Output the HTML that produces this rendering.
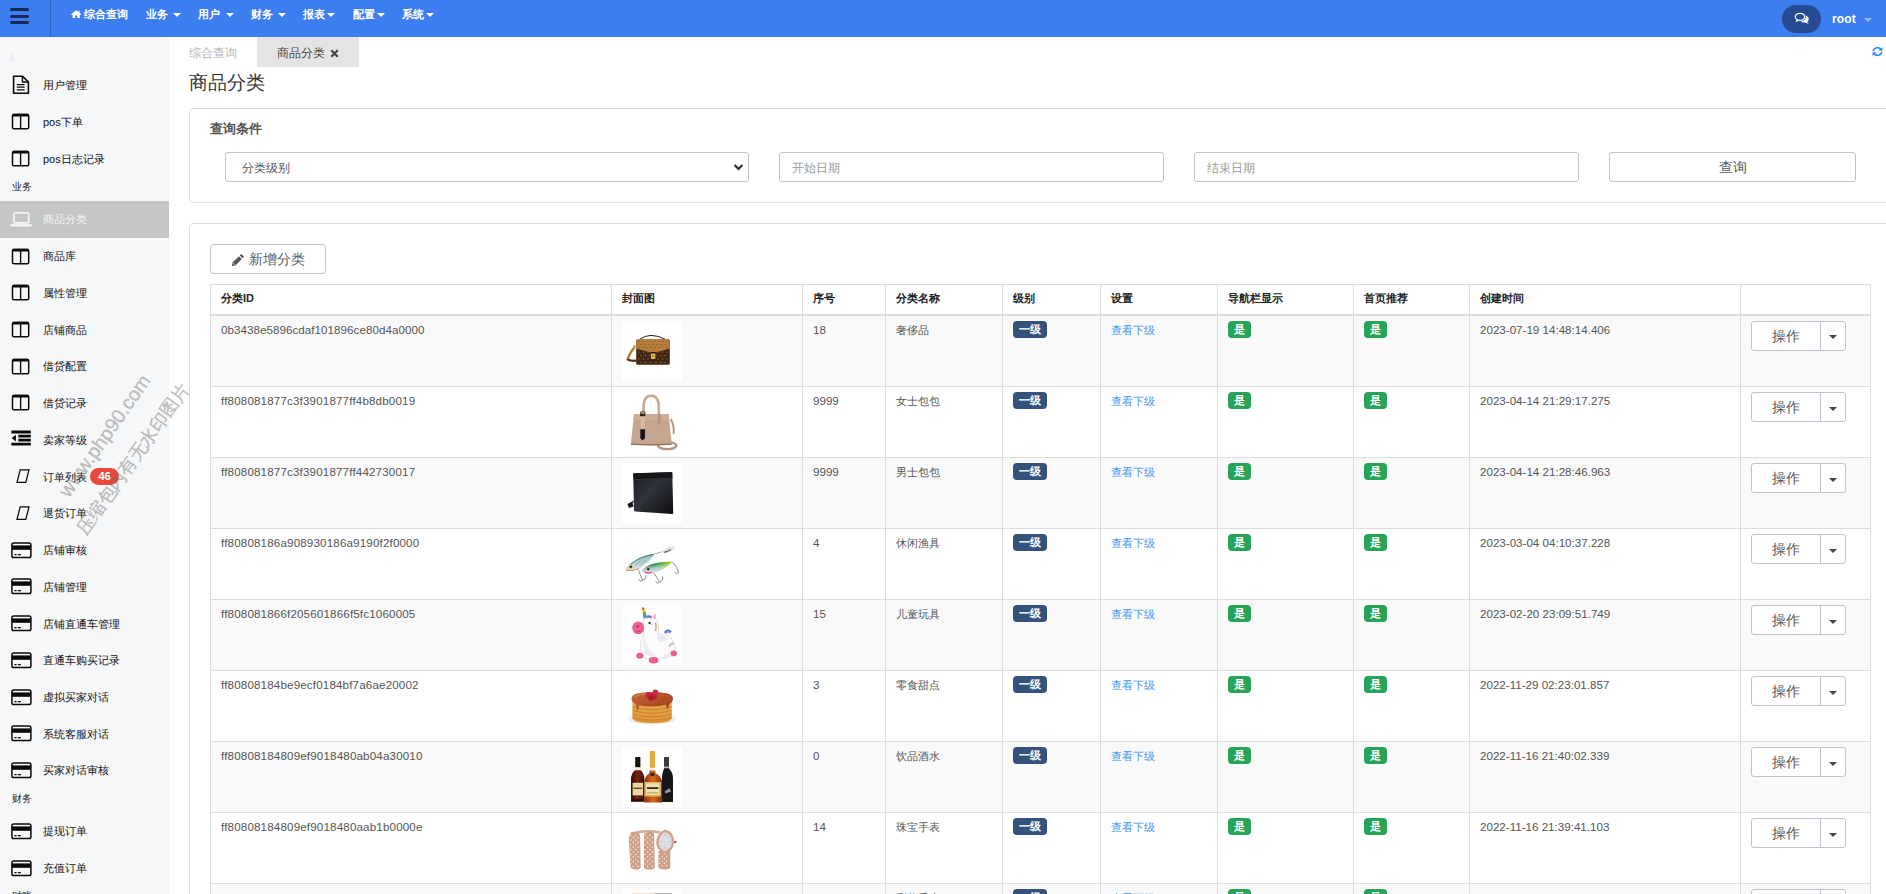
<!DOCTYPE html>
<html lang="zh">
<head>
<meta charset="utf-8">
<title>商品分类</title>
<style>
*{box-sizing:border-box;margin:0;padding:0}
html,body{width:1886px;height:894px;overflow:hidden;background:#fff;font-family:"Liberation Sans",sans-serif;font-size:12px;color:#333;line-height:1}
.abs{position:absolute}
/* navbar */
#nav{position:absolute;left:0;top:0;width:1886px;height:37px;background:#3c7def}
#nav .bar{position:absolute;left:10px;width:19px;height:3px;border-radius:1.5px;background:#172b52}
#nav .div{position:absolute;left:50px;top:0;width:1px;height:37px;background:#2f63c4}
#nav .mi{position:absolute;top:8px;height:12px;line-height:12px;font-size:11px;font-weight:bold;color:#fff;white-space:nowrap}
.caret{display:inline-block;width:0;height:0;border-left:4px solid transparent;border-right:4px solid transparent;border-top:4px solid #fff;vertical-align:middle}
#pill{position:absolute;left:1782px;top:5px;width:39px;height:28px;border-radius:14px;background:#254b93}
/* sidebar */
#side{position:absolute;left:0;top:37px;width:169px;height:857px;background:#f5f7f9;overflow:hidden}
#side .it{position:absolute;left:0;width:169px;height:37px}
#side .it .tx{position:absolute;left:43px;top:12px;font-size:11px;line-height:13px;color:#111;white-space:nowrap}
#side .it svg{position:absolute;left:11px;top:9px}
#side .it.on{background:#c5c6c6}
#side .it.on .tx{color:#f4f4f4}
#side .lb{position:absolute;left:12px;font-size:10px;line-height:12px;color:#222}
#side .bdg{position:absolute;left:90.3px;top:9.6px;width:28.6px;height:17.4px;border-radius:9px;background:#e8493a;color:#fff;font-weight:bold;font-size:11.5px;line-height:17.4px;text-align:center}
.wm{position:absolute;color:rgba(110,110,110,.4);-webkit-text-stroke:0.35px rgba(110,110,110,.4);white-space:nowrap;line-height:1;z-index:20}
/* main */
#nav{z-index:10}
#side{z-index:9}
#main{position:absolute;left:0;top:0;width:1886px;height:894px;background:#fff;overflow:hidden;z-index:1}
.tab0{position:absolute;left:189px;top:46px;font-size:12px;line-height:14px;color:#b3b3b3}
.tab1{position:absolute;left:257px;top:37px;width:102px;height:30px;background:#e4e4e4;color:#444;font-size:12px;line-height:14px}
.tab1 span{position:absolute;left:20px;top:9px}
.tab1 svg{position:absolute;left:73px;top:11.5px}
.h1{position:absolute;left:189px;top:72px;font-size:19.3px;line-height:22px;color:#333}
.panel{position:absolute;left:189px;width:1760px;border:1px solid #ddd;border-radius:4px;background:#fff}
.ptitle{position:absolute;left:210px;top:121px;font-size:13px;line-height:15px;font-weight:bold;color:#555}
.inp{position:absolute;top:152px;height:30px;border:1px solid #bcc5cd;border-radius:3px;background:#fff}
.inp span{position:absolute;left:12px;top:8px;font-size:12px;line-height:14px;color:#9a9a9a}
.qbtn{position:absolute;left:1609px;top:152px;width:247px;height:30px;border:1px solid #bcc5cd;border-radius:3px;background:#fff;text-align:center;font-size:14px;line-height:28px;color:#555}
.addbtn{position:absolute;left:210px;top:244px;width:116px;height:30px;border:1px solid #bcc5cd;border-radius:4px;background:#fff;color:#56606a}
.addbtn span{position:absolute;left:38px;top:6px;font-size:14px;line-height:16px}
.tb{position:absolute;left:210px;top:284px;width:1661px;table-layout:fixed;border-collapse:collapse;font-size:11.6px;color:#555}
.tb th,.tb td{border:1px solid #ddd;vertical-align:top;text-align:left;padding:0 0 0 10px;overflow:hidden;white-space:nowrap}
.tb th{height:30px;font-size:11px;font-weight:bold;color:#222;border-bottom:2px solid #ddd;line-height:14px;padding-top:6px}
.tb td{height:71px;line-height:14px;padding-top:7px}
.tb tbody tr:nth-child(odd) td{background:#f9f9f9}
.tb tbody tr:first-child td{height:72px}
.tb td.cn{font-size:11px}
.tb td.id{letter-spacing:0.16px}
.tb tbody tr:first-child td.id{letter-spacing:0.05px}
.tb a{color:#4296f3;font-size:11px}
.tb .pic{display:block;margin-top:-2px}
.lv,.ys{display:inline-block;height:17px;line-height:17px;border-radius:4px;color:#fff;font-size:11px;font-weight:bold;text-align:center;margin-top:-2px;position:relative;top:-1px}
.lv{width:34px;background:#33537d}
.ys{width:23px;background:#27a35a}
.op{position:relative;margin-top:-2px;height:30px;width:96px}
.o1{position:absolute;left:0;top:0;width:70px;height:30px;border:1px solid #bcc5cd;border-radius:3px 0 0 3px;background:#fff;text-align:center;font-size:14px;line-height:28px;color:#555}
.o2{position:absolute;left:69px;top:0;width:26px;height:30px;border:1px solid #bcc5cd;border-radius:0 3px 3px 0;background:#fff;text-align:center;line-height:29px}
</style>
</head>
<body>
<svg width="0" height="0" style="position:absolute"><defs><filter id="bl" x="-5%" y="-5%" width="110%" height="110%"><feGaussianBlur stdDeviation="0.45"/></filter></defs></svg>
<div id="nav">
  <div class="bar" style="top:8px"></div><div class="bar" style="top:14.7px"></div><div class="bar" style="top:21px"></div>
  <div class="div"></div>
  <div class="mi" style="left:71px"><svg width="10.4" height="8.4" viewBox="0 0 11 9" style="vertical-align:0px;margin-right:3px"><path d="M5.5 0.2 L0 4.6 L0.7 5.4 L1.6 4.7 V9 H4.4 V6 H6.6 V9 H9.4 V4.7 L10.3 5.4 L11 4.6 L9 3 V0.8 H7.8 V2 Z" fill="#fff"/></svg>综合查询</div>
  <div class="mi" style="left:146px">业务</div><i class="caret abs" style="left:173px;top:13px"></i>
  <div class="mi" style="left:198px">用户</div><i class="caret abs" style="left:226px;top:13px"></i>
  <div class="mi" style="left:251px">财务</div><i class="caret abs" style="left:278px;top:13px"></i>
  <div class="mi" style="left:303px">报表</div><i class="caret abs" style="left:327px;top:13px"></i>
  <div class="mi" style="left:352.5px">配置</div><i class="caret abs" style="left:377px;top:13px"></i>
  <div class="mi" style="left:402px">系统</div><i class="caret abs" style="left:426px;top:13px"></i>
  <div id="pill"><svg width="16" height="13" viewBox="0 0 16 13" style="position:absolute;left:11.5px;top:7px"><ellipse cx="10.3" cy="6.9" rx="4.4" ry="3.5" fill="#fff"/><path d="M12.4 9.2 L14.8 12 L10.6 10.2 Z" fill="#fff"/><ellipse cx="6" cy="4.8" rx="6" ry="4.6" fill="#254b93"/><ellipse cx="6" cy="4.8" rx="4.7" ry="3.5" fill="#254b93" stroke="#fff" stroke-width="1.25"/><path d="M2.8 7.6 L1.5 10.2 L5.4 8.6 Z" fill="#fff"/></svg></div>
  <div class="mi" style="left:1832px;top:13px;font-size:12px;letter-spacing:0.1px">root</div><i class="caret abs" style="left:1864px;top:18px;border-top-color:#9db9f3"></i>
</div>
<div id="side">
<div class="it" style="top:29.95px;height:36.73px"><svg width="18" height="20" viewBox="0 0 18 20" style="left:12px;top:8.36px"><path d="M1.6 1.2 H10.4 L16.4 7 V18.2 H1.6 Z" fill="none" stroke="#0a0a0a" stroke-width="1.6" stroke-linejoin="round"/><path d="M10.4 1.2 V7 H16.4" fill="none" stroke="#0a0a0a" stroke-width="1.4"/><path d="M4.8 9.6 H12.6 M4.8 12.2 H12.6 M4.8 14.8 H12.6" stroke="#0a0a0a" stroke-width="1.3"/></svg><span class="tx" style="top:12.51px">用户管理</span></div>
<div class="it" style="top:66.69px;height:36.73px"><svg width="19" height="17" viewBox="0 0 19 17" style="left:11.1px;top:9.76px"><rect x="1.5" y="1.4" width="16.2" height="14.4" rx="1.6" fill="none" stroke="#0a0a0a" stroke-width="1.5"/><rect x="1.5" y="0.8" width="16.2" height="2.6" rx="1" fill="#0a0a0a"/><path d="M9.6 2 V16" stroke="#0a0a0a" stroke-width="1.4"/></svg><span class="tx" style="top:12.51px">pos下单</span></div>
<div class="it" style="top:103.42px;height:36.73px"><svg width="19" height="17" viewBox="0 0 19 17" style="left:11.1px;top:9.76px"><rect x="1.5" y="1.4" width="16.2" height="14.4" rx="1.6" fill="none" stroke="#0a0a0a" stroke-width="1.5"/><rect x="1.5" y="0.8" width="16.2" height="2.6" rx="1" fill="#0a0a0a"/><path d="M9.6 2 V16" stroke="#0a0a0a" stroke-width="1.4"/></svg><span class="tx" style="top:12.51px">pos日志记录</span></div>
<div class="it on" style="top:164.03px;height:36.73px"><svg width="23" height="16" viewBox="0 0 23 16" style="left:10px;top:10.66px"><rect x="3.9" y="0.9" width="14.8" height="10" rx="1.2" fill="none" stroke="#f6f6f6" stroke-width="1.6"/><rect x="0.3" y="12.3" width="21.6" height="2.2" rx="1" fill="#f6f6f6"/></svg><span class="tx" style="top:11.71px">商品分类</span></div>
<div class="it" style="top:200.76px;height:36.73px"><svg width="19" height="17" viewBox="0 0 19 17" style="left:11.1px;top:9.76px"><rect x="1.5" y="1.4" width="16.2" height="14.4" rx="1.6" fill="none" stroke="#0a0a0a" stroke-width="1.5"/><rect x="1.5" y="0.8" width="16.2" height="2.6" rx="1" fill="#0a0a0a"/><path d="M9.6 2 V16" stroke="#0a0a0a" stroke-width="1.4"/></svg><span class="tx" style="top:12.51px">商品库</span></div>
<div class="it" style="top:237.50px;height:36.73px"><svg width="19" height="17" viewBox="0 0 19 17" style="left:11.1px;top:9.76px"><rect x="1.5" y="1.4" width="16.2" height="14.4" rx="1.6" fill="none" stroke="#0a0a0a" stroke-width="1.5"/><rect x="1.5" y="0.8" width="16.2" height="2.6" rx="1" fill="#0a0a0a"/><path d="M9.6 2 V16" stroke="#0a0a0a" stroke-width="1.4"/></svg><span class="tx" style="top:12.51px">属性管理</span></div>
<div class="it" style="top:274.23px;height:36.73px"><svg width="19" height="17" viewBox="0 0 19 17" style="left:11.1px;top:9.76px"><rect x="1.5" y="1.4" width="16.2" height="14.4" rx="1.6" fill="none" stroke="#0a0a0a" stroke-width="1.5"/><rect x="1.5" y="0.8" width="16.2" height="2.6" rx="1" fill="#0a0a0a"/><path d="M9.6 2 V16" stroke="#0a0a0a" stroke-width="1.4"/></svg><span class="tx" style="top:12.51px">店铺商品</span></div>
<div class="it" style="top:310.95px;height:36.73px"><svg width="19" height="17" viewBox="0 0 19 17" style="left:11.1px;top:9.76px"><rect x="1.5" y="1.4" width="16.2" height="14.4" rx="1.6" fill="none" stroke="#0a0a0a" stroke-width="1.5"/><rect x="1.5" y="0.8" width="16.2" height="2.6" rx="1" fill="#0a0a0a"/><path d="M9.6 2 V16" stroke="#0a0a0a" stroke-width="1.4"/></svg><span class="tx" style="top:12.51px">借贷配置</span></div>
<div class="it" style="top:347.68px;height:36.73px"><svg width="19" height="17" viewBox="0 0 19 17" style="left:11.1px;top:9.76px"><rect x="1.5" y="1.4" width="16.2" height="14.4" rx="1.6" fill="none" stroke="#0a0a0a" stroke-width="1.5"/><rect x="1.5" y="0.8" width="16.2" height="2.6" rx="1" fill="#0a0a0a"/><path d="M9.6 2 V16" stroke="#0a0a0a" stroke-width="1.4"/></svg><span class="tx" style="top:12.51px">借贷记录</span></div>
<div class="it" style="top:384.41px;height:36.73px"><svg width="21" height="16" viewBox="0 0 21 16" style="left:11px;top:8.76px"><path d="M0.4 0.5 H19.8 V3.4 H0.4 Z M7.3 4.7 H19.8 V7.4 H7.3 Z M7.3 8.7 H19.8 V11.4 H7.3 Z M0.4 12.7 H19.8 V15.5 H0.4 Z M4.9 4.7 V11.4 L0.7 8.05 Z" fill="#0a0a0a"/></svg><span class="tx" style="top:12.51px">卖家等级</span></div>
<div class="it" style="top:421.14px;height:36.73px"><svg width="15" height="15" viewBox="0 0 15 15" style="left:16px;top:10.66px"><path d="M4.2 0.8 H13 L9.8 13.3 H1 Z" fill="none" stroke="#0a0a0a" stroke-width="1.25" stroke-linejoin="miter"/></svg><span class="tx" style="top:12.51px">订单列表</span><span class="bdg">46</span></div>
<div class="it" style="top:457.88px;height:36.73px"><svg width="15" height="15" viewBox="0 0 15 15" style="left:16px;top:10.66px"><path d="M4.2 0.8 H13 L9.8 13.3 H1 Z" fill="none" stroke="#0a0a0a" stroke-width="1.25" stroke-linejoin="miter"/></svg><span class="tx" style="top:12.51px">退货订单</span></div>
<div class="it" style="top:494.61px;height:36.73px"><svg width="22" height="17" viewBox="0 0 22 17" style="left:10.5px;top:10.16px"><rect x="0.9" y="0.9" width="19" height="14.6" rx="1.8" fill="none" stroke="#0a0a0a" stroke-width="1.5"/><rect x="1" y="3.4" width="18.8" height="4.4" fill="#0a0a0a"/><path d="M3.4 12.6 H5.6 M6.8 12.6 H9.8" stroke="#0a0a0a" stroke-width="1.3"/></svg><span class="tx" style="top:12.51px">店铺审核</span></div>
<div class="it" style="top:531.33px;height:36.73px"><svg width="22" height="17" viewBox="0 0 22 17" style="left:10.5px;top:10.16px"><rect x="0.9" y="0.9" width="19" height="14.6" rx="1.8" fill="none" stroke="#0a0a0a" stroke-width="1.5"/><rect x="1" y="3.4" width="18.8" height="4.4" fill="#0a0a0a"/><path d="M3.4 12.6 H5.6 M6.8 12.6 H9.8" stroke="#0a0a0a" stroke-width="1.3"/></svg><span class="tx" style="top:12.51px">店铺管理</span></div>
<div class="it" style="top:568.06px;height:36.73px"><svg width="22" height="17" viewBox="0 0 22 17" style="left:10.5px;top:10.16px"><rect x="0.9" y="0.9" width="19" height="14.6" rx="1.8" fill="none" stroke="#0a0a0a" stroke-width="1.5"/><rect x="1" y="3.4" width="18.8" height="4.4" fill="#0a0a0a"/><path d="M3.4 12.6 H5.6 M6.8 12.6 H9.8" stroke="#0a0a0a" stroke-width="1.3"/></svg><span class="tx" style="top:12.51px">店铺直通车管理</span></div>
<div class="it" style="top:604.79px;height:36.73px"><svg width="22" height="17" viewBox="0 0 22 17" style="left:10.5px;top:10.16px"><rect x="0.9" y="0.9" width="19" height="14.6" rx="1.8" fill="none" stroke="#0a0a0a" stroke-width="1.5"/><rect x="1" y="3.4" width="18.8" height="4.4" fill="#0a0a0a"/><path d="M3.4 12.6 H5.6 M6.8 12.6 H9.8" stroke="#0a0a0a" stroke-width="1.3"/></svg><span class="tx" style="top:12.51px">直通车购买记录</span></div>
<div class="it" style="top:641.52px;height:36.73px"><svg width="22" height="17" viewBox="0 0 22 17" style="left:10.5px;top:10.16px"><rect x="0.9" y="0.9" width="19" height="14.6" rx="1.8" fill="none" stroke="#0a0a0a" stroke-width="1.5"/><rect x="1" y="3.4" width="18.8" height="4.4" fill="#0a0a0a"/><path d="M3.4 12.6 H5.6 M6.8 12.6 H9.8" stroke="#0a0a0a" stroke-width="1.3"/></svg><span class="tx" style="top:12.51px">虚拟买家对话</span></div>
<div class="it" style="top:678.25px;height:36.73px"><svg width="22" height="17" viewBox="0 0 22 17" style="left:10.5px;top:10.16px"><rect x="0.9" y="0.9" width="19" height="14.6" rx="1.8" fill="none" stroke="#0a0a0a" stroke-width="1.5"/><rect x="1" y="3.4" width="18.8" height="4.4" fill="#0a0a0a"/><path d="M3.4 12.6 H5.6 M6.8 12.6 H9.8" stroke="#0a0a0a" stroke-width="1.3"/></svg><span class="tx" style="top:12.51px">系统客服对话</span></div>
<div class="it" style="top:714.98px;height:36.73px"><svg width="22" height="17" viewBox="0 0 22 17" style="left:10.5px;top:10.16px"><rect x="0.9" y="0.9" width="19" height="14.6" rx="1.8" fill="none" stroke="#0a0a0a" stroke-width="1.5"/><rect x="1" y="3.4" width="18.8" height="4.4" fill="#0a0a0a"/><path d="M3.4 12.6 H5.6 M6.8 12.6 H9.8" stroke="#0a0a0a" stroke-width="1.3"/></svg><span class="tx" style="top:12.51px">买家对话审核</span></div>
<div class="it" style="top:775.84px;height:36.73px"><svg width="22" height="17" viewBox="0 0 22 17" style="left:10.5px;top:10.16px"><rect x="0.9" y="0.9" width="19" height="14.6" rx="1.8" fill="none" stroke="#0a0a0a" stroke-width="1.5"/><rect x="1" y="3.4" width="18.8" height="4.4" fill="#0a0a0a"/><path d="M3.4 12.6 H5.6 M6.8 12.6 H9.8" stroke="#0a0a0a" stroke-width="1.3"/></svg><span class="tx" style="top:12.51px">提现订单</span></div>
<div class="it" style="top:812.84px;height:36.73px"><svg width="22" height="17" viewBox="0 0 22 17" style="left:10.5px;top:10.16px"><rect x="0.9" y="0.9" width="19" height="14.6" rx="1.8" fill="none" stroke="#0a0a0a" stroke-width="1.5"/><rect x="1" y="3.4" width="18.8" height="4.4" fill="#0a0a0a"/><path d="M3.4 12.6 H5.6 M6.8 12.6 H9.8" stroke="#0a0a0a" stroke-width="1.3"/></svg><span class="tx" style="top:12.51px">充值订单</span></div>
<div class="lb" style="top:143.5px">业务</div>
<div class="lb" style="top:755.5px">财务</div>
<div class="lb" style="top:852.5px">对账</div>
<div class="lb" style="top:16px;left:9px;color:#e6e9ed">4</div>
</div>
<div id="main">
<svg class="abs" style="left:1872px;top:45.9px" width="11" height="11" viewBox="0 0 11 11"><path d="M1.3 4.5 A4.3 4.3 0 0 1 8.4 2.9" fill="none" stroke="#2b8cfd" stroke-width="1.75" stroke-linecap="round"/><path d="M9.7 6.5 A4.3 4.3 0 0 1 2.6 8.1" fill="none" stroke="#2b8cfd" stroke-width="1.75" stroke-linecap="round"/><path d="M10.4 0.9 V4.8 H6.5 Z M0.6 10.1 V6.2 H4.5 Z" fill="#2b8cfd"/></svg>
<div class="tab0">综合查询</div>
<div class="tab1"><span>商品分类</span><svg width="9" height="9" viewBox="0 0 9 9"><path d="M1.3 1.3 L7.7 7.7 M7.7 1.3 L1.3 7.7" stroke="#444" stroke-width="2.3"/></svg></div>
<div class="h1">商品分类</div>
<div class="panel" style="top:108px;height:95px"></div>
<div class="ptitle">查询条件</div>
<div class="inp" style="left:225px;width:524px"><span style="color:#555;left:16px">分类级别</span><svg style="position:absolute;right:4px;top:9.5px" width="11" height="9" viewBox="0 0 11 9"><path d="M1.6 2 L5.5 6 L9.4 2" fill="none" stroke="#222" stroke-width="2"/></svg></div>
<div class="inp" style="left:779px;width:385px"><span>开始日期</span></div>
<div class="inp" style="left:1194px;width:385px"><span>结束日期</span></div>
<div class="qbtn">查询</div>
<div class="panel" style="top:223px;height:760px"></div>
<div class="addbtn"><svg width="14" height="14" viewBox="0 0 14 14" style="position:absolute;left:20px;top:7.5px"><path d="M10.2 0.9 L13.1 3.8 L11.6 5.3 L8.7 2.4 Z M7.9 3.2 L10.8 6.1 L4.4 12.5 L0.9 13.1 L1.5 9.6 Z" fill="#555"/><path d="M2.3 10.3 L3.7 11.7" stroke="#fff" stroke-width="0.9"/></svg><span>新增分类</span></div>
<table class="tb"><colgroup>
<col style="width:401px">
<col style="width:191px">
<col style="width:83px">
<col style="width:117px">
<col style="width:98px">
<col style="width:117px">
<col style="width:136px">
<col style="width:116px">
<col style="width:271px">
<col style="width:130px">
</colgroup><thead><tr>
<th>分类ID</th>
<th>封面图</th>
<th>序号</th>
<th>分类名称</th>
<th>级别</th>
<th>设置</th>
<th>导航栏显示</th>
<th>首页推荐</th>
<th>创建时间</th>
<th></th>
</tr></thead><tbody>
<tr><td class="id">0b3438e5896cdaf101896ce80d4a0000</td><td><svg class="pic" width="60" height="60" viewBox="0 0 60 60"><rect width="60" height="60" fill="#fff"/><g filter="url(#bl)"><path d="M17.8 18.2 Q23 14.6 29 14.4 Q36 14.4 43 18.2" fill="none" stroke="#2a1a10" stroke-width="1"/><path d="M13.2 25.5 Q8 31 5.4 38.6 Q9 40.6 14.6 39.6" fill="none" stroke="#b5742f" stroke-width="2.1"/><path d="M5.6 38.2 Q9 40.4 14.6 39.4" fill="none" stroke="#4a2a12" stroke-width="1.8"/><circle cx="12.4" cy="25.6" r="1.5" fill="#d8b04a"/><rect x="14.2" y="18.4" width="33.6" height="25.4" rx="1.6" fill="#432714"/><circle cx="17.0" cy="31.0" r="0.6" fill="#b98a3c"/><circle cx="21.5" cy="31.0" r="0.6" fill="#b98a3c"/><circle cx="26.0" cy="31.0" r="0.6" fill="#b98a3c"/><circle cx="36.0" cy="31.0" r="0.6" fill="#b98a3c"/><circle cx="40.5" cy="31.0" r="0.6" fill="#b98a3c"/><circle cx="45.0" cy="31.0" r="0.6" fill="#b98a3c"/><circle cx="19.0" cy="34.5" r="0.6" fill="#b98a3c"/><circle cx="23.5" cy="34.5" r="0.6" fill="#b98a3c"/><circle cx="28.0" cy="34.5" r="0.6" fill="#b98a3c"/><circle cx="34.0" cy="34.5" r="0.6" fill="#b98a3c"/><circle cx="38.5" cy="34.5" r="0.6" fill="#b98a3c"/><circle cx="43.0" cy="34.5" r="0.6" fill="#b98a3c"/><circle cx="17.0" cy="38.0" r="0.6" fill="#b98a3c"/><circle cx="21.5" cy="38.0" r="0.6" fill="#b98a3c"/><circle cx="26.0" cy="38.0" r="0.6" fill="#b98a3c"/><circle cx="36.0" cy="38.0" r="0.6" fill="#b98a3c"/><circle cx="40.5" cy="38.0" r="0.6" fill="#b98a3c"/><circle cx="45.0" cy="38.0" r="0.6" fill="#b98a3c"/><circle cx="19.0" cy="41.5" r="0.6" fill="#b98a3c"/><circle cx="23.5" cy="41.5" r="0.6" fill="#b98a3c"/><circle cx="28.0" cy="41.5" r="0.6" fill="#b98a3c"/><circle cx="34.0" cy="41.5" r="0.6" fill="#b98a3c"/><circle cx="38.5" cy="41.5" r="0.6" fill="#b98a3c"/><circle cx="43.0" cy="41.5" r="0.6" fill="#b98a3c"/><path d="M14.2 19.6 Q14.2 18.2 15.8 18.2 H46.2 Q47.8 18.2 47.8 19.6 V27.6 L31 32.2 L14.2 27.6 Z" fill="#b57c3c"/><circle cx="17.0" cy="20.5" r="0.55" fill="#7a4a1e"/><circle cx="21.0" cy="20.5" r="0.55" fill="#7a4a1e"/><circle cx="25.0" cy="20.5" r="0.55" fill="#7a4a1e"/><circle cx="29.0" cy="20.5" r="0.55" fill="#7a4a1e"/><circle cx="33.0" cy="20.5" r="0.55" fill="#7a4a1e"/><circle cx="37.0" cy="20.5" r="0.55" fill="#7a4a1e"/><circle cx="41.0" cy="20.5" r="0.55" fill="#7a4a1e"/><circle cx="45.0" cy="20.5" r="0.55" fill="#7a4a1e"/><circle cx="19.0" cy="23.5" r="0.55" fill="#7a4a1e"/><circle cx="23.0" cy="23.5" r="0.55" fill="#7a4a1e"/><circle cx="27.0" cy="23.5" r="0.55" fill="#7a4a1e"/><circle cx="31.0" cy="23.5" r="0.55" fill="#7a4a1e"/><circle cx="35.0" cy="23.5" r="0.55" fill="#7a4a1e"/><circle cx="39.0" cy="23.5" r="0.55" fill="#7a4a1e"/><circle cx="43.0" cy="23.5" r="0.55" fill="#7a4a1e"/><circle cx="17.0" cy="26.5" r="0.55" fill="#7a4a1e"/><circle cx="21.0" cy="26.5" r="0.55" fill="#7a4a1e"/><circle cx="25.0" cy="26.5" r="0.55" fill="#7a4a1e"/><circle cx="29.0" cy="26.5" r="0.55" fill="#7a4a1e"/><circle cx="33.0" cy="26.5" r="0.55" fill="#7a4a1e"/><circle cx="37.0" cy="26.5" r="0.55" fill="#7a4a1e"/><circle cx="41.0" cy="26.5" r="0.55" fill="#7a4a1e"/><circle cx="45.0" cy="26.5" r="0.55" fill="#7a4a1e"/><rect x="29" y="31" width="4.4" height="1.6" fill="#1c120a"/><rect x="29" y="32.4" width="4.4" height="5.6" rx="0.5" fill="#e3bb52"/><rect x="29.8" y="34.4" width="2.8" height="1.2" fill="#a8822c"/></g></svg></td><td>18</td><td class="cn">奢侈品</td><td><b class="lv">一级</b></td><td><a>查看下级</a></td><td><b class="ys">是</b></td><td><b class="ys">是</b></td><td>2023-07-19 14:48:14.406</td><td><div class="op"><div class="o1">操作</div><div class="o2"><i class="caret" style="border-top-color:#444"></i></div></div></td></tr>
<tr><td class="id">ff808081877c3f3901877ff4b8db0019</td><td><svg class="pic" width="60" height="60" viewBox="0 0 60 60"><rect width="60" height="60" fill="#fff"/><g filter="url(#bl)"><path d="M21.6 23 V15 Q21.6 3.8 29 3.8 Q36.8 3.8 36.8 15 V23" fill="none" stroke="#caa990" stroke-width="2.6"/><path d="M48.6 27 Q52.4 33 51.6 42" fill="none" stroke="#b8977f" stroke-width="2"/><ellipse cx="45.2" cy="53.6" rx="9.2" ry="3.6" fill="none" stroke="#b3927a" stroke-width="2.2"/><path d="M12 22.2 H46.6 L49.8 52.6 Q30 54 8.8 52.6 Z" fill="#c5a58f"/><path d="M12 22.2 H46.6 L47.2 28 H11.4 Z" fill="#cbad98"/><path d="M8.8 51.4 Q30 53 49.8 51.4 L49.8 52.8 Q30 54.4 8.8 52.8 Z" fill="#8c6f5c"/><rect x="35.6" y="21.6" width="3.2" height="11.2" rx="1.5" fill="#b8947c"/><rect x="18.6" y="24" width="4.2" height="14.4" rx="1.4" fill="#d9bba4"/><path d="M18.3 37.2 H23 V46.2 L20.6 48.6 L18.3 46.2 Z" fill="#17171a"/><rect x="18" y="19.6" width="5.4" height="4.6" rx="1" fill="#2a261c"/><rect x="18.6" y="20.2" width="4.2" height="1.4" fill="#d9c06a"/></g></svg></td><td>9999</td><td class="cn">女士包包</td><td><b class="lv">一级</b></td><td><a>查看下级</a></td><td><b class="ys">是</b></td><td><b class="ys">是</b></td><td>2023-04-14 21:29:17.275</td><td><div class="op"><div class="o1">操作</div><div class="o2"><i class="caret" style="border-top-color:#444"></i></div></div></td></tr>
<tr><td class="id">ff808081877c3f3901877ff442730017</td><td><svg class="pic" width="60" height="60" viewBox="0 0 60 60"><rect width="60" height="60" fill="#fff"/><g filter="url(#bl)"><defs><linearGradient id="g3" x1="0" y1="0" x2="1" y2="1"><stop offset="0" stop-color="#1b1d22"/><stop offset="0.45" stop-color="#30333a"/><stop offset="1" stop-color="#0d0e11"/></linearGradient></defs><path d="M8 39.6 L10.2 38.8 L11.6 43.6 L7 45 L5.4 41.2 Z" fill="#121316"/><path d="M11.6 38 L9.4 40.2" stroke="#15161a" stroke-width="1.1"/><path d="M11.2 11.2 Q11.2 10.2 12.4 10.2 L49 9 Q50.2 9 50.3 10.2 L51.2 50 Q51.2 51.2 50 51 L13.2 48.6 Q12 48.4 12 47.2 Z" fill="url(#g3)"/><path d="M11.3 10.6 L50.2 9.2 L50.4 15.2 L11.6 16.6 Z" fill="#121317"/><path d="M11.6 16.6 L50.4 15.2" stroke="#3c4048" stroke-width="0.6"/></g></svg></td><td>9999</td><td class="cn">男士包包</td><td><b class="lv">一级</b></td><td><a>查看下级</a></td><td><b class="ys">是</b></td><td><b class="ys">是</b></td><td>2023-04-14 21:28:46.963</td><td><div class="op"><div class="o1">操作</div><div class="o2"><i class="caret" style="border-top-color:#444"></i></div></div></td></tr>
<tr><td class="id">ff80808186a908930186a9190f2f0000</td><td><svg class="pic" width="60" height="60" viewBox="0 0 60 60"><rect width="60" height="60" fill="#fff"/><g filter="url(#bl)"><defs><linearGradient id="g4a" x1="0" y1="0" x2="0.3" y2="1"><stop offset="0" stop-color="#4f9188"/><stop offset="0.4" stop-color="#a3c6c4"/><stop offset="1" stop-color="#dfe7ea"/></linearGradient><linearGradient id="g4c" x1="0" y1="0" x2="1" y2="0"><stop offset="0" stop-color="#17566e"/><stop offset="0.45" stop-color="#3c9a5c"/><stop offset="1" stop-color="#b9d823"/></linearGradient><linearGradient id="g4d" x1="0" y1="0" x2="0.25" y2="1"><stop offset="0.35" stop-color="#fff" stop-opacity="0"/><stop offset="0.75" stop-color="#c9dbe4" stop-opacity="0.95"/><stop offset="1" stop-color="#e6ebf0"/></linearGradient><linearGradient id="g4b" x1="0" y1="0" x2="0.2" y2="1"><stop offset="0" stop-color="#1f6f63"/><stop offset="0.4" stop-color="#8fc63e"/><stop offset="0.75" stop-color="#b9d5dc"/><stop offset="1" stop-color="#e4e9ee"/></linearGradient></defs><path d="M39.4 17.8 Q44 12.2 53.4 12.6 Q51 18.4 43.2 19.4 Z" fill="#dfe3e8"/><path d="M42 18.4 Q46 17.6 49 15.4" stroke="#5a5f68" stroke-width="1.1" fill="none"/><path d="M32.6 20.2 L39.6 17.8" stroke="#8a8a8a" stroke-width="0.8"/><path d="M2.8 35.8 Q12 22.6 32.8 19.8 Q28 27.6 16.6 35.2 Q8 37.8 2.8 35.8 Z" fill="url(#g4a)"/><path d="M4 36.2 Q10 37.4 17 34.8" stroke="#e0703a" stroke-width="0.8" fill="none"/><path d="M9 30 Q18 22.6 31.6 20.4" stroke="#3f7f78" stroke-width="1" fill="none"/><path d="M13 31.6 L19 27 M17.6 31.4 L24 26 M11 28.6 L16 25.4" stroke="#7fa9aa" stroke-width="0.8"/><circle cx="8.8" cy="32.8" r="1.3" fill="#2a2418"/><circle cx="8.8" cy="32.8" r="1.9" fill="none" stroke="#c9a84a" stroke-width="0.5"/><path d="M20.2 36.4 Q27 27.4 50.6 27.4 Q45 34.6 30 39 Q23 39.8 20.2 36.4 Z" fill="url(#g4c)"/><path d="M20.2 36.4 Q27 27.4 50.6 27.4 Q45 34.6 30 39 Q23 39.8 20.2 36.4 Z" fill="url(#g4d)"/><path d="M22.4 38 Q26 39.6 30.2 38.2" stroke="#e23c9a" stroke-width="1.2" fill="none"/><circle cx="26.2" cy="35.2" r="1.2" fill="#241f14"/><circle cx="26.2" cy="35.2" r="1.8" fill="none" stroke="#d4b44c" stroke-width="0.5"/><path d="M16.6 36.6 L20.4 46 Q18.8 48.8 16.6 45.4 M20.4 46 Q23.6 46.6 24 41.4" fill="none" stroke="#6e6e72" stroke-width="0.8"/><path d="M32 39 L37.6 48 Q35.6 50.8 33.8 47.4 M37.6 48 Q41.2 48 40.6 42.4" fill="none" stroke="#6e6e72" stroke-width="0.8"/><path d="M50.6 28.2 Q56 33.6 56.6 38.6 Q54.6 41 52.6 38" fill="none" stroke="#6e6e72" stroke-width="0.8"/></g></svg></td><td>4</td><td class="cn">休闲渔具</td><td><b class="lv">一级</b></td><td><a>查看下级</a></td><td><b class="ys">是</b></td><td><b class="ys">是</b></td><td>2023-03-04 04:10:37.228</td><td><div class="op"><div class="o1">操作</div><div class="o2"><i class="caret" style="border-top-color:#444"></i></div></div></td></tr>
<tr><td class="id">ff808081866f205601866f5fc1060005</td><td><svg class="pic" width="60" height="60" viewBox="0 0 60 60"><rect width="60" height="60" fill="#fefefe"/><g filter="url(#bl)"><path d="M21 52 Q15 40 22 30 Q19 22 22 14 Q28 10 34 14 Q38 20 36 30 Q44 28 50 34 Q55 42 52 50 Q44 54 36 53 Q28 56 21 52 Z" fill="#fcfcfd" stroke="#dddbe3" stroke-width="0.9"/><path d="M22 31 Q20 42 24 50 Q30 53 36 51 Q30 49 26 42 Q23 36 22 31 Z" fill="#eeecf2"/><path d="M40 50 Q47 50 51 44 Q50 50 44 52 Z" fill="#ebe9f0"/><path d="M35 31 Q42 29.6 47 33.6 Q42 38.6 36 36.4 Z" fill="#ebe9f0"/><path d="M20 2.2 Q22.6 2 23 5.6 L24.6 12.6 L21.4 13.4 Z" fill="#f5c431"/><path d="M20 2.2 Q21.6 2.2 22.2 4.2 L20.6 5.4 Z" fill="#e7354e"/><path d="M21.2 9 L24 8.6 L24.6 12.6 L21.4 13.4 Z" fill="#3f8fd8"/><path d="M21 7 L23.6 6.6 L24 8.6 L21.2 9 Z" fill="#4bb04f"/><path d="M24.4 11.6 Q27 10.4 29.6 11.8" stroke="#3e7fe0" stroke-width="1.5" fill="none"/><path d="M24.6 12.8 Q27 11.8 29.4 13" stroke="#e94a8a" stroke-width="0.9" fill="none"/><path d="M30.4 13 Q31.6 8.4 33.6 9.6 Q34.6 12 33.4 14.6 Z" fill="#f6b3cf"/><ellipse cx="16.2" cy="22.8" rx="6" ry="6.4" fill="#ef5f93"/><path d="M20.4 18.4 Q23 22 21 27.4 Q19.4 24 20.4 18.4 Z" fill="#f0659a"/><circle cx="15.6" cy="21.6" r="0.8" fill="#3a1020"/><path d="M14.6 26.8 Q17 26 19 26.8" stroke="#a82f5a" stroke-width="0.7" fill="none"/><ellipse cx="27.6" cy="18" rx="1.1" ry="1.3" fill="#22222a"/><path d="M29 19.6 L30.6 19.4" stroke="#f08ab0" stroke-width="0.8"/><path d="M33.6 18 Q34.6 22 33.6 26" stroke="#e94a9a" stroke-width="0.9" fill="none"/><path d="M34.4 18.4 Q35.2 22 34.4 25.4" stroke="#f2d03c" stroke-width="0.6" fill="none"/><path d="M42.6 27.8 Q45.6 23.4 49.2 27" stroke="#3e6fd8" stroke-width="1.6" fill="none"/><path d="M43.2 28.8 Q45.8 25.4 48.6 28.2" stroke="#7a4fc8" stroke-width="1" fill="none"/><path d="M46.6 41.6 Q47.6 37.6 51.4 37.8" stroke="#f0b429" stroke-width="0.9" fill="none"/><path d="M47.6 42 Q48.4 38.8 51.6 38.8" stroke="#4a9be0" stroke-width="0.8" fill="none"/><ellipse cx="17.8" cy="50.8" rx="3.6" ry="3" fill="#ee5d8f"/><ellipse cx="31.6" cy="55.2" rx="4.8" ry="3.3" fill="#ee5d8f"/><ellipse cx="51.8" cy="48.4" rx="3.2" ry="2.8" fill="#ee5d8f"/></g></svg></td><td>15</td><td class="cn">儿童玩具</td><td><b class="lv">一级</b></td><td><a>查看下级</a></td><td><b class="ys">是</b></td><td><b class="ys">是</b></td><td>2023-02-20 23:09:51.749</td><td><div class="op"><div class="o1">操作</div><div class="o2"><i class="caret" style="border-top-color:#444"></i></div></div></td></tr>
<tr><td class="id">ff80808184be9ecf0184bf7a6ae20002</td><td><svg class="pic" width="60" height="60" viewBox="0 0 60 60"><rect width="60" height="60" fill="#fff"/><g filter="url(#bl)"><defs><linearGradient id="g6" x1="0" y1="0" x2="0" y2="1"><stop offset="0" stop-color="#e9ab4c"/><stop offset="1" stop-color="#dc9436"/></linearGradient><linearGradient id="g6t" x1="0" y1="0" x2="1" y2="1"><stop offset="0" stop-color="#c46a3a"/><stop offset="0.5" stop-color="#b4502a"/><stop offset="1" stop-color="#9c3f20"/></linearGradient></defs><ellipse cx="30" cy="43" rx="24" ry="5.6" fill="#ecebee"/><path d="M10.4 24 V41.6 Q10.4 47.2 30 47.2 Q49.8 47.2 49.8 41.6 V24 Z" fill="url(#g6)"/><path d="M10.6 31 Q30 36.4 49.6 31 M10.6 34.6 Q30 40 49.6 34.6 M10.6 38.2 Q30 43.6 49.6 38.2 M10.8 41.6 Q30 47 49.4 41.6" fill="none" stroke="#c27a2c" stroke-width="0.8"/><path d="M9.6 22.4 Q9.6 16 30.2 16 Q51 16 51 22.4 Q51 26 47.6 27.6 L45.6 33.6 L43.6 28.8 Q38 30.4 30 30.4 Q22 30.4 17 29.2 L15.6 35.4 L13.8 28 Q9.6 26 9.6 22.4 Z" fill="url(#g6t)"/><path d="M13 20.6 Q18 18 25 17.6" stroke="#d88a5a" stroke-width="1" fill="none"/><circle cx="26.6" cy="19" r="3.1" fill="#c4213c"/><circle cx="31.6" cy="20.2" r="3.3" fill="#b91c36"/><circle cx="33.4" cy="16.4" r="2.9" fill="#cf2a45"/><circle cx="28.8" cy="22.4" r="2.4" fill="#a8182e"/></g></svg></td><td>3</td><td class="cn">零食甜点</td><td><b class="lv">一级</b></td><td><a>查看下级</a></td><td><b class="ys">是</b></td><td><b class="ys">是</b></td><td>2022-11-29 02:23:01.857</td><td><div class="op"><div class="o1">操作</div><div class="o2"><i class="caret" style="border-top-color:#444"></i></div></div></td></tr>
<tr><td class="id">ff80808184809ef9018480ab04a30010</td><td><svg class="pic" width="60" height="60" viewBox="0 0 60 60"><rect width="60" height="60" fill="#fff"/><g filter="url(#bl)"><defs><linearGradient id="g7a" x1="0" y1="0" x2="1" y2="0"><stop offset="0" stop-color="#3a0d08"/><stop offset="0.5" stop-color="#7a2410"/><stop offset="1" stop-color="#3a0d08"/></linearGradient><linearGradient id="g7b" x1="0" y1="0" x2="1" y2="0"><stop offset="0" stop-color="#8a300a"/><stop offset="0.5" stop-color="#d8691a"/><stop offset="1" stop-color="#8a300a"/></linearGradient></defs><rect x="13.2" y="10" width="5.2" height="10.6" rx="0.6" fill="#161210"/><rect x="12.8" y="20.4" width="6" height="3" fill="#f1ede6"/><path d="M12.8 23.2 H18.8 Q22.4 27 22.4 32 V54.4 H9 V32 Q9 27 12.8 23.2 Z" fill="url(#g7a)"/><rect x="10.6" y="35.8" width="10.4" height="12.6" fill="#e6d7a4"/><rect x="11.4" y="40.6" width="8.8" height="1.4" fill="#5a4a2a"/><rect x="9" y="52.2" width="13.4" height="2.4" fill="#2a0c08"/><rect x="42" y="10" width="5" height="11.8" rx="0.6" fill="#3a3a3e"/><rect x="41.8" y="19.6" width="5.4" height="1.4" fill="#b8b8bc"/><path d="M42 21.6 H47 Q51 26 51 31 V55 H40 V31 Q40 26 42 21.6 Z" fill="#121214"/><path d="M42.6 44.6 L47.6 41.2 L49 44.4 L43.6 46.4 Z" fill="#9a9a9e"/><rect x="27.8" y="4" width="5.2" height="17" rx="0.8" fill="#e2aa3a"/><rect x="27.4" y="20.8" width="6" height="2.8" fill="#f6f3ec"/><path d="M27.4 23.4 H33.4 V26 Q40 29.6 40.2 36 V55.6 H22.2 V36 Q22.4 29.6 27.4 26 Z" fill="url(#g7b)"/><rect x="28.4" y="25.6" width="4" height="3.4" fill="#3a2a14"/><rect x="22.6" y="35" width="16.2" height="14.4" fill="#efe0ac"/><rect x="23.4" y="35.8" width="14.6" height="12.8" fill="none" stroke="#c29a3a" stroke-width="0.7"/><rect x="25" y="40.2" width="11.4" height="1.8" fill="#3a2c1a"/><rect x="25" y="45.4" width="11.4" height="1" fill="#c29a3a"/></g></svg></td><td>0</td><td class="cn">饮品酒水</td><td><b class="lv">一级</b></td><td><a>查看下级</a></td><td><b class="ys">是</b></td><td><b class="ys">是</b></td><td>2022-11-16 21:40:02.339</td><td><div class="op"><div class="o1">操作</div><div class="o2"><i class="caret" style="border-top-color:#444"></i></div></div></td></tr>
<tr><td class="id">ff80808184809ef9018480aab1b0000e</td><td><svg class="pic" width="60" height="60" viewBox="0 0 60 60"><rect width="60" height="60" fill="#fff"/><g filter="url(#bl)"><path d="M9 15.6 Q26 11.6 38 14.6" fill="none" stroke="#d6ab93" stroke-width="2.6"/><path d="M9.4 14.6 Q18.6 12 18.2 20 L18.6 49 Q18.6 51.6 13.6 51.6 Q8.6 51.6 8.4 48 L7 24 Q6.4 17 9.4 14.6 Z" fill="#d0a086"/><circle cx="8.8" cy="17.2" r="0.78" fill="#f6ebe5"/><circle cx="13.6" cy="17.2" r="0.78" fill="#f6ebe5"/><circle cx="11.2" cy="19.6" r="0.78" fill="#f6ebe5"/><circle cx="16.0" cy="19.6" r="0.78" fill="#f6ebe5"/><circle cx="8.8" cy="22.0" r="0.78" fill="#f6ebe5"/><circle cx="13.6" cy="22.0" r="0.78" fill="#f6ebe5"/><circle cx="11.2" cy="24.4" r="0.78" fill="#f6ebe5"/><circle cx="16.0" cy="24.4" r="0.78" fill="#f6ebe5"/><circle cx="8.8" cy="26.8" r="0.78" fill="#f6ebe5"/><circle cx="13.6" cy="26.8" r="0.78" fill="#f6ebe5"/><circle cx="11.2" cy="29.2" r="0.78" fill="#f6ebe5"/><circle cx="16.0" cy="29.2" r="0.78" fill="#f6ebe5"/><circle cx="8.8" cy="31.6" r="0.78" fill="#f6ebe5"/><circle cx="13.6" cy="31.6" r="0.78" fill="#f6ebe5"/><circle cx="11.2" cy="34.0" r="0.78" fill="#f6ebe5"/><circle cx="16.0" cy="34.0" r="0.78" fill="#f6ebe5"/><circle cx="8.8" cy="36.4" r="0.78" fill="#f6ebe5"/><circle cx="13.6" cy="36.4" r="0.78" fill="#f6ebe5"/><circle cx="11.2" cy="38.8" r="0.78" fill="#f6ebe5"/><circle cx="16.0" cy="38.8" r="0.78" fill="#f6ebe5"/><circle cx="8.8" cy="41.2" r="0.78" fill="#f6ebe5"/><circle cx="13.6" cy="41.2" r="0.78" fill="#f6ebe5"/><circle cx="11.2" cy="43.6" r="0.78" fill="#f6ebe5"/><circle cx="16.0" cy="43.6" r="0.78" fill="#f6ebe5"/><circle cx="8.8" cy="46.0" r="0.78" fill="#f6ebe5"/><circle cx="13.6" cy="46.0" r="0.78" fill="#f6ebe5"/><circle cx="11.2" cy="48.4" r="0.78" fill="#f6ebe5"/><circle cx="16.0" cy="48.4" r="0.78" fill="#f6ebe5"/><path d="M22 16 Q27 12.4 32 15 L32.8 49 Q32.8 51.6 27.4 51.6 Q22 51.6 22 49 Z" fill="#cf9e84"/><circle cx="23.2" cy="17.2" r="0.78" fill="#f6ebe5"/><circle cx="28.0" cy="17.2" r="0.78" fill="#f6ebe5"/><circle cx="25.6" cy="19.6" r="0.78" fill="#f6ebe5"/><circle cx="30.4" cy="19.6" r="0.78" fill="#f6ebe5"/><circle cx="23.2" cy="22.0" r="0.78" fill="#f6ebe5"/><circle cx="28.0" cy="22.0" r="0.78" fill="#f6ebe5"/><circle cx="25.6" cy="24.4" r="0.78" fill="#f6ebe5"/><circle cx="30.4" cy="24.4" r="0.78" fill="#f6ebe5"/><circle cx="23.2" cy="26.8" r="0.78" fill="#f6ebe5"/><circle cx="28.0" cy="26.8" r="0.78" fill="#f6ebe5"/><circle cx="25.6" cy="29.2" r="0.78" fill="#f6ebe5"/><circle cx="30.4" cy="29.2" r="0.78" fill="#f6ebe5"/><circle cx="23.2" cy="31.6" r="0.78" fill="#f6ebe5"/><circle cx="28.0" cy="31.6" r="0.78" fill="#f6ebe5"/><circle cx="25.6" cy="34.0" r="0.78" fill="#f6ebe5"/><circle cx="30.4" cy="34.0" r="0.78" fill="#f6ebe5"/><circle cx="23.2" cy="36.4" r="0.78" fill="#f6ebe5"/><circle cx="28.0" cy="36.4" r="0.78" fill="#f6ebe5"/><circle cx="25.6" cy="38.8" r="0.78" fill="#f6ebe5"/><circle cx="30.4" cy="38.8" r="0.78" fill="#f6ebe5"/><circle cx="23.2" cy="41.2" r="0.78" fill="#f6ebe5"/><circle cx="28.0" cy="41.2" r="0.78" fill="#f6ebe5"/><circle cx="25.6" cy="43.6" r="0.78" fill="#f6ebe5"/><circle cx="30.4" cy="43.6" r="0.78" fill="#f6ebe5"/><circle cx="23.2" cy="46.0" r="0.78" fill="#f6ebe5"/><circle cx="28.0" cy="46.0" r="0.78" fill="#f6ebe5"/><circle cx="25.6" cy="48.4" r="0.78" fill="#f6ebe5"/><circle cx="30.4" cy="48.4" r="0.78" fill="#f6ebe5"/><path d="M36.4 33 H48.2 V49 Q48.2 51.4 42.4 51.4 Q36.4 51.4 36.4 49 Z" fill="#cf9e84"/><circle cx="37.6" cy="35.8" r="0.78" fill="#f6ebe5"/><circle cx="42.4" cy="35.8" r="0.78" fill="#f6ebe5"/><circle cx="40.0" cy="38.2" r="0.78" fill="#f6ebe5"/><circle cx="44.8" cy="38.2" r="0.78" fill="#f6ebe5"/><circle cx="37.6" cy="40.6" r="0.78" fill="#f6ebe5"/><circle cx="42.4" cy="40.6" r="0.78" fill="#f6ebe5"/><circle cx="40.0" cy="43.0" r="0.78" fill="#f6ebe5"/><circle cx="44.8" cy="43.0" r="0.78" fill="#f6ebe5"/><circle cx="37.6" cy="45.4" r="0.78" fill="#f6ebe5"/><circle cx="42.4" cy="45.4" r="0.78" fill="#f6ebe5"/><circle cx="40.0" cy="47.8" r="0.78" fill="#f6ebe5"/><circle cx="44.8" cy="47.8" r="0.78" fill="#f6ebe5"/><path d="M43.4 11.6 Q52.6 14 52 25 Q51.2 33.6 42.6 35.4 Q34.6 33 34.2 24.6 Q34.6 14.6 43.4 11.6 Z" fill="#d3a186"/><path d="M43.4 14 Q50.2 16 49.8 24.8 Q49 31.4 42.8 33 Q36.8 31 36.6 24.6 Q36.8 16.6 43.4 14 Z" fill="#dcdce2"/><path d="M43 16 V18 M43 29 V31 M38.4 23.6 H40 M46.6 23.6 H48.2" stroke="#d0a086" stroke-width="0.7"/><circle cx="53.2" cy="24" r="1.2" fill="#d23a6c"/></g></svg></td><td>14</td><td class="cn">珠宝手表</td><td><b class="lv">一级</b></td><td><a>查看下级</a></td><td><b class="ys">是</b></td><td><b class="ys">是</b></td><td>2022-11-16 21:39:41.103</td><td><div class="op"><div class="o1">操作</div><div class="o2"><i class="caret" style="border-top-color:#444"></i></div></div></td></tr>
<tr><td class="id">ff80808184809ef9018480aa5c3d000c</td><td><svg class="pic" width="60" height="60" viewBox="0 0 60 60"><rect width="60" height="60" fill="#fff"/><g filter="url(#bl)"><rect x="10" y="4.4" width="22" height="4" fill="#f1c3b4"/><rect x="32" y="4.4" width="18" height="4" fill="#8c8c90"/></g></svg></td><td>1</td><td class="cn">彩妆香水</td><td><b class="lv">一级</b></td><td><a>查看下级</a></td><td><b class="ys">是</b></td><td><b class="ys">是</b></td><td>2022-11-16 21:39:19.270</td><td><div class="op"><div class="o1">操作</div><div class="o2"><i class="caret" style="border-top-color:#444"></i></div></div></td></tr>
</tbody></table>
</div>
<div class="wm" style="left:105.1px;top:436px;transform:translate(-50%,-50%) rotate(-55deg);font-size:19.6px">www.php90.com</div><div class="wm" style="left:133.3px;top:458.8px;transform:translate(-50%,-50%) rotate(-54.6deg);font-size:18px">压缩包内有无水印图片</div>
</body>
</html>
